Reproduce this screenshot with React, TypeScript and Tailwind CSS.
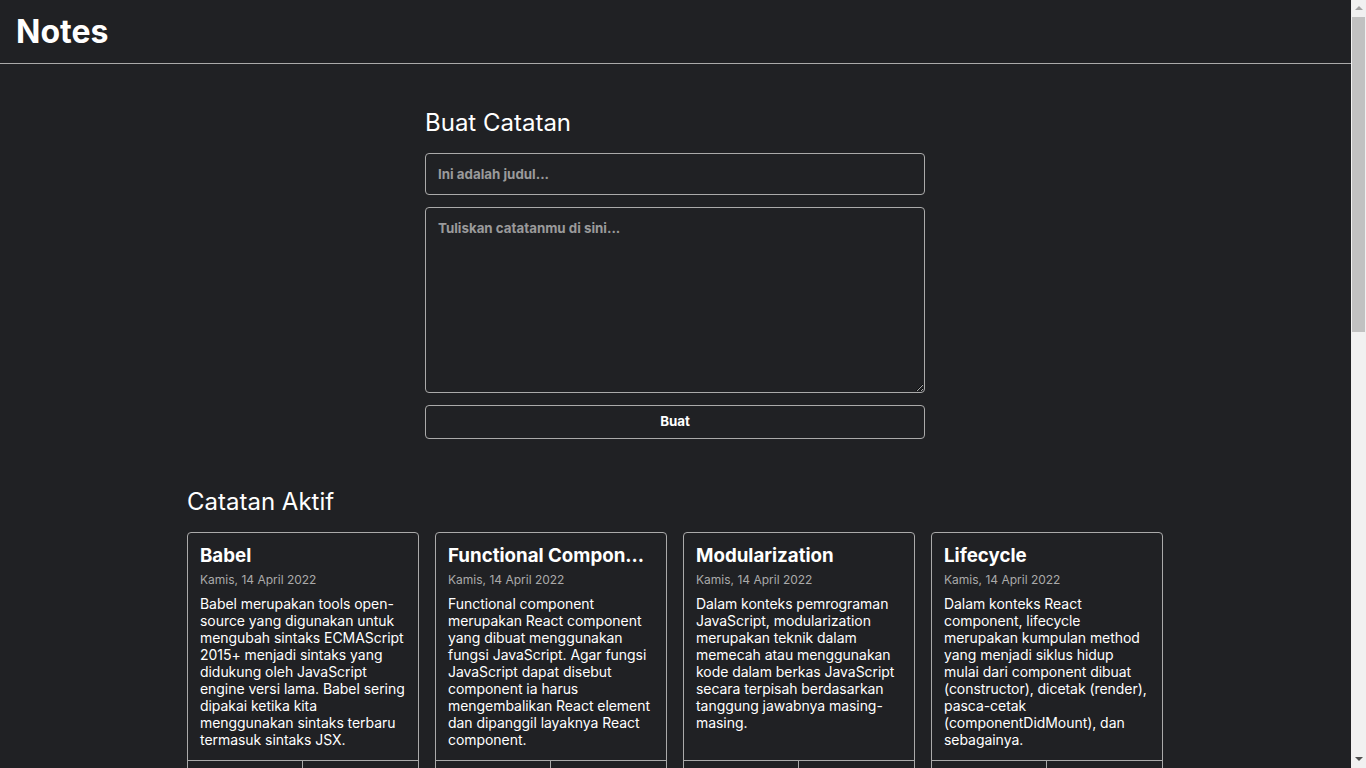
import { useState } from 'react'

// ── Data ───────────────────────────────────────────────────────────────────────

type Note = {
  id: number
  title: string
  body: string
  createdAt: string
  archived: boolean
}

const initialNotes: Note[] = [
  {
    id: 1,
    title: 'Babel',
    body: 'Babel merupakan tools open-source yang digunakan untuk mengubah sintaks ECMAScript 2015+ menjadi sintaks yang didukung oleh JavaScript engine versi lama. Babel sering dipakai ketika kita menggunakan sintaks terbaru termasuk sintaks JSX.',
    createdAt: 'Kamis, 14 April 2022',
    archived: false,
  },
  {
    id: 2,
    title: 'Functional Component',
    body: 'Functional component merupakan React component yang dibuat menggunakan fungsi JavaScript. Agar fungsi JavaScript dapat disebut component ia harus mengembalikan React element dan dipanggil layaknya React component.',
    createdAt: 'Kamis, 14 April 2022',
    archived: false,
  },
  {
    id: 3,
    title: 'Modularization',
    body: 'Dalam konteks pemrograman JavaScript, modularization merupakan teknik dalam memecah atau menggunakan kode dalam berkas JavaScript secara terpisah berdasarkan tanggung jawabnya masing-masing.',
    createdAt: 'Kamis, 14 April 2022',
    archived: false,
  },
  {
    id: 4,
    title: 'Lifecycle',
    body: 'Dalam konteks React component, lifecycle merupakan kumpulan method yang menjadi siklus hidup mulai dari component dibuat (constructor), dicetak (render), pasca-cetak (componentDidMount), dan sebagainya.',
    createdAt: 'Kamis, 14 April 2022',
    archived: false,
  },
  {
    id: 5,
    title: 'ESM',
    body: 'ESM (ECMAScript Module) merupakan format modularisasi standar JavaScript.',
    createdAt: 'Kamis, 14 April 2022',
    archived: false,
  },
  {
    id: 6,
    title: 'Module Bundler',
    body: 'Dalam konteks pemrograman JavaScript, module bundler merupakan tools yang digunakan untuk menggabungkan seluruh modul JavaScript yang digunakan oleh aplikasi menjadi satu berkas.',
    createdAt: 'Kamis, 14 April 2022',
    archived: false,
  },
  {
    id: 7,
    title: 'React Hooks',
    body: 'Hooks merupakan fitur baru di React yang memungkinkan kita menggunakan state dan fitur React lainnya tanpa perlu menulis class component. Contohnya useState dan useEffect yang sering dipakai.',
    createdAt: 'Jumat, 15 April 2022',
    archived: true,
  },
  {
    id: 8,
    title: 'Controlled Component',
    body: 'Controlled component merupakan elemen form yang nilainya dikendalikan oleh state React. Setiap perubahan nilai ditangani melalui event handler dan disimpan kembali ke dalam state component.',
    createdAt: 'Jumat, 15 April 2022',
    archived: true,
  },
  {
    id: 9,
    title: 'JSX',
    body: 'JSX merupakan ekstensi sintaks JavaScript yang memungkinkan kita menuliskan struktur UI menyerupai HTML di dalam kode JavaScript. JSX akan diubah menjadi pemanggilan React.createElement.',
    createdAt: 'Jumat, 15 April 2022',
    archived: true,
  },
]

// ── Note card ──────────────────────────────────────────────────────────────────

function NoteItem({
  note,
  onDelete,
  onArchive,
}: {
  note: Note
  onDelete: (id: number) => void
  onArchive: (id: number) => void
}) {
  return (
    <div className="flex flex-col justify-between rounded border border-[#aaaaaa]">
      <div className="flex-1 p-3">
        <h3 className="truncate text-[18.72px] font-bold leading-[22px] text-white">{note.title}</h3>
        <p className="mt-[5px] text-[12px] leading-[15px] text-[#aaaaaa]">{note.createdAt}</p>
        <p className="mt-2 text-[14px] leading-[17px] tracking-[-0.05px] text-white">{note.body}</p>
      </div>
      <div className="flex">
        <button
          onClick={() => onDelete(note.id)}
          className="block w-full border-t border-r border-[#aaaaaa] py-2 text-[13.33px] font-bold leading-4 text-[#ff5f52]"
        >
          Hapus
        </button>
        <button
          onClick={() => onArchive(note.id)}
          className="block w-full border-t border-[#aaaaaa] py-2 text-[13.33px] font-bold leading-4 text-[#fff176]"
        >
          {note.archived ? 'Pindahkan' : 'Arsipkan'}
        </button>
      </div>
    </div>
  )
}

function NotesList({
  notes,
  onDelete,
  onArchive,
}: {
  notes: Note[]
  onDelete: (id: number) => void
  onArchive: (id: number) => void
}) {
  if (notes.length === 0) {
    return <p className="mb-12 text-center text-[#aaaaaa]">Tidak ada catatan</p>
  }
  return (
    <div className="mb-12 grid grid-cols-[repeat(auto-fill,minmax(200px,1fr))] gap-4">
      {notes.map((n) => (
        <NoteItem key={n.id} note={n} onDelete={onDelete} onArchive={onArchive} />
      ))}
    </div>
  )
}

// Classic light scrollbar, as the browser in the reference draws it
function ScrollTrack() {
  return (
    <aside className="sticky top-0 flex h-screen w-[15px] shrink-0 flex-col items-center self-start bg-[#f1f1f1]">
      <span className="mt-[6px] h-0 w-0 border-x-[4px] border-b-[4px] border-x-transparent border-b-[#a3a3a3]" />
      <span className="mt-[7px] h-[315px] w-[13px] bg-[#c1c1c1]" />
      <span className="mt-auto mb-[7px] h-0 w-0 border-x-[4px] border-t-[4px] border-x-transparent border-t-[#505050]" />
    </aside>
  )
}

// ── App ────────────────────────────────────────────────────────────────────────

export default function App() {
  const [notes, setNotes] = useState<Note[]>(initialNotes)
  const [title, setTitle] = useState('')
  const [body, setBody] = useState('')

  const onDelete = (id: number) => setNotes((ns) => ns.filter((n) => n.id !== id))
  const onArchive = (id: number) =>
    setNotes((ns) => ns.map((n) => (n.id === id ? { ...n, archived: !n.archived } : n)))

  const onSubmit = (e: React.FormEvent) => {
    e.preventDefault()
    if (!title.trim()) return
    setNotes((ns) => [
      ...ns,
      { id: Date.now(), title, body, createdAt: 'Kamis, 14 April 2022', archived: false },
    ])
    setTitle('')
    setBody('')
  }

  const active = notes.filter((n) => !n.archived)
  const archived = notes.filter((n) => n.archived)

  return (
    <div className="flex min-h-screen bg-[#202124] font-['Inter','Noto_Sans',sans-serif] text-white">
      <div className="min-w-0 flex-1">
        {/* Header */}
        <header className="flex items-center border-b border-[#aaaaaa] px-4 py-3">
          <h1 className="flex-1 text-[32px] font-bold leading-[39px]">Notes</h1>
        </header>

        <div className="pr-px">
          <main className="mx-auto my-4 max-w-[1000px] p-3">
            {/* Input form */}
            <div className="mx-auto mb-12 max-w-[500px]">
              <h2 className="mt-4 mb-4 text-[24px] leading-[29px] font-normal">Buat Catatan</h2>
              <form onSubmit={onSubmit}>
                <input
                  type="text"
                  value={title}
                  onChange={(e) => setTitle(e.target.value)}
                  placeholder="Ini adalah judul..."
                  className="block h-[42px] w-full rounded border border-[#aaaaaa] bg-transparent px-3 text-[13.33px] font-bold text-white outline-none placeholder:text-[#9a9a9b]"
                />
                <textarea
                  value={body}
                  onChange={(e) => setBody(e.target.value)}
                  placeholder="Tuliskan catatanmu di sini..."
                  className="mt-3 block h-[186px] w-full rounded border border-[#aaaaaa] bg-transparent p-3 text-[13.33px] font-bold leading-4 text-white outline-none placeholder:text-[#9a9a9b]"
                />
                <button
                  type="submit"
                  className="mt-3 block h-[34px] w-full rounded border border-[#aaaaaa] bg-transparent text-[13.33px] font-bold text-white"
                >
                  Buat
                </button>
              </form>
            </div>

            <h2 className="mb-4 text-[24px] leading-[29px] font-normal">Catatan Aktif</h2>
            <NotesList notes={active} onDelete={onDelete} onArchive={onArchive} />

            <h2 className="mb-4 text-[24px] leading-[29px] font-normal">Arsip</h2>
            <NotesList notes={archived} onDelete={onDelete} onArchive={onArchive} />
          </main>
        </div>
      </div>
      <ScrollTrack />
    </div>
  )
}
